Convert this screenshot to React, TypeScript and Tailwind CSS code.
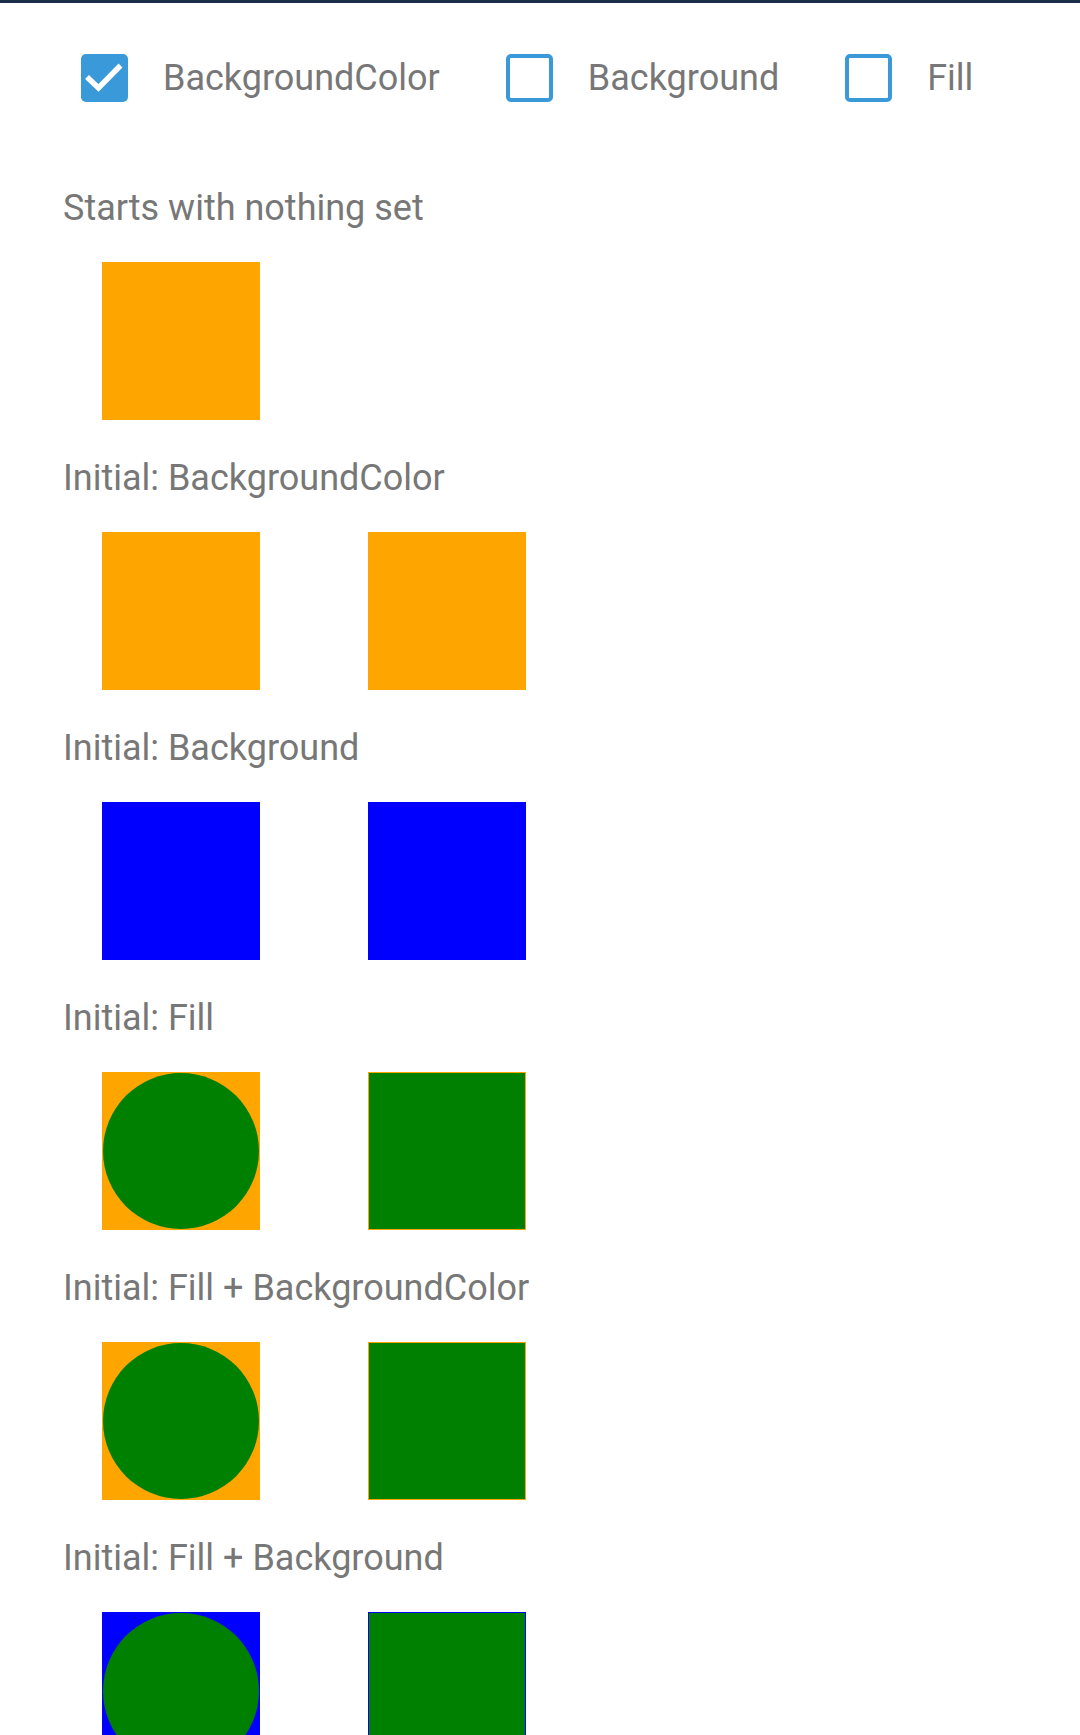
type Shape = 'plain' | 'circle' | 'framed';

interface Sample {
  kind: Shape;
  bg: string;
}

interface Section {
  title: string;
  samples: Sample[];
}

const sections: Section[] = [
  { title: 'Starts with nothing set', samples: [{ kind: 'plain', bg: 'bg-[#ffa500]' }] },
  {
    title: 'Initial: BackgroundColor',
    samples: [
      { kind: 'plain', bg: 'bg-[#ffa500]' },
      { kind: 'plain', bg: 'bg-[#ffa500]' },
    ],
  },
  {
    title: 'Initial: Background',
    samples: [
      { kind: 'plain', bg: 'bg-[#0000ff]' },
      { kind: 'plain', bg: 'bg-[#0000ff]' },
    ],
  },
  {
    title: 'Initial: Fill',
    samples: [
      { kind: 'circle', bg: 'bg-[#ffa500]' },
      { kind: 'framed', bg: 'bg-[#ffa500]' },
    ],
  },
  {
    title: 'Initial: Fill + BackgroundColor',
    samples: [
      { kind: 'circle', bg: 'bg-[#ffa500]' },
      { kind: 'framed', bg: 'bg-[#ffa500]' },
    ],
  },
  {
    title: 'Initial: Fill + Background',
    samples: [
      { kind: 'circle', bg: 'bg-[#0000ff]' },
      { kind: 'framed', bg: 'bg-[#0000ff]' },
    ],
  },
];

function Checkbox({ checked, label }: { checked?: boolean; label: string }) {
  return (
    <div className="flex items-center gap-[35px]">
      {checked ? (
        <div className="w-[47px] h-[48px] rounded-[5px] bg-[#3a9ad9] flex items-center justify-center">
          <svg width="47" height="48" viewBox="0 0 47 48">
            <path d="M6 23 L17.5 34 L39.5 11.5" fill="none" stroke="#fff" strokeWidth="5.5" />
          </svg>
        </div>
      ) : (
        <div className="w-[47px] h-[48px] rounded-[5px] border-[4.5px] border-[#3a9ad9] bg-white" />
      )}
      <span className="text-[36px] leading-[43px] text-[#777777]">{label}</span>
    </div>
  );
}

function Swatch({ sample }: { sample: Sample }) {
  if (sample.kind === 'circle') {
    return (
      <div className={`w-[158px] h-[158px] ${sample.bg} p-px`}>
        <div className="w-full h-full rounded-full bg-[#008000]" />
      </div>
    );
  }
  if (sample.kind === 'framed') {
    return (
      <div className={`w-[158px] h-[158px] ${sample.bg} p-px`}>
        <div className="w-full h-full bg-[#008000]" />
      </div>
    );
  }
  return <div className={`w-[158px] h-[158px] ${sample.bg}`} />;
}

export default function App() {
  return (
    <div
      className="w-[1080px] h-[1735px] bg-white overflow-hidden flex flex-col"
      style={{ fontFamily: 'Roboto, "Noto Sans", sans-serif' }}
    >
      <div className="h-[3px] bg-[#1c2d47] shrink-0" />

      {/* Toggles */}
      <div className="flex items-center pt-[51px] pl-[81px] gap-[66px]">
        <Checkbox checked label="BackgroundColor" />
        <Checkbox label="Background" />
        <Checkbox label="Fill" />
      </div>

      {/* Samples */}
      <div className="flex flex-col pl-[63px] pt-[85px] gap-[37px]">
        {sections.map((s) => (
          <div key={s.title} className="flex flex-col gap-[32px]">
            <div className="text-[36px] leading-[43px] text-[#777777]">{s.title}</div>
            <div className="flex gap-[108px] pl-[39px]">
              {s.samples.map((sm, i) => (
                <Swatch key={i} sample={sm} />
              ))}
            </div>
          </div>
        ))}
      </div>

      <div className="flex-1" />
      <div className="h-[2px] bg-black shrink-0" />
    </div>
  );
}
